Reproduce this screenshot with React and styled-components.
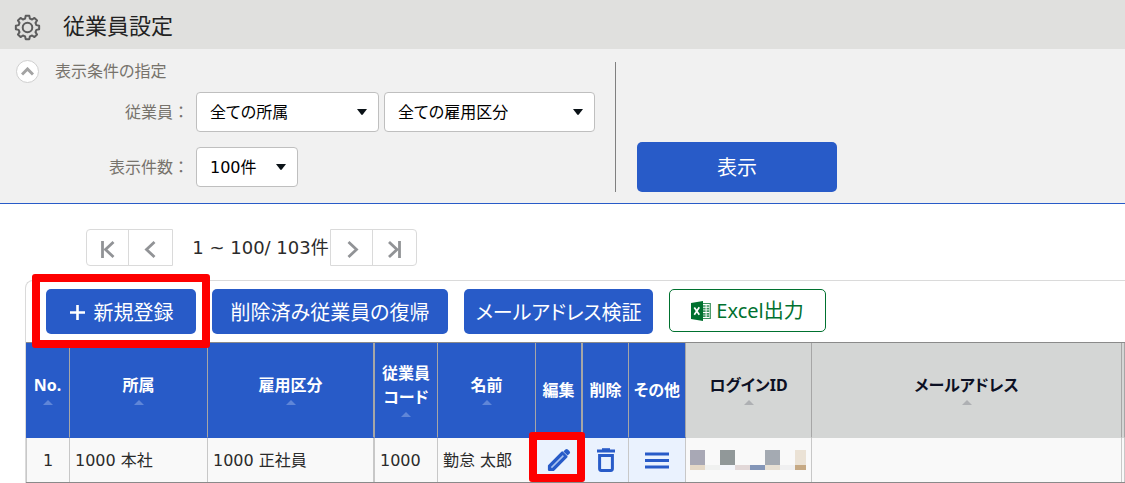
import React from "react";
import styled, { createGlobalStyle } from "styled-components";

const BLUE = "#285bc8";
const UI_FONT = '"DejaVu Sans", "Noto Sans CJK JP", sans-serif';
const HUMANIST_FONT = '"Noto Sans", "Noto Sans CJK JP", sans-serif';

const GlobalStyle = createGlobalStyle`
  * { box-sizing: border-box; }
  body {
    margin: 0;
    background: #fff;
    color: #2b2b2b;
    font-family: ${UI_FONT};
    font-size: 16px;
    line-height: 24px;
    font-feature-settings: "palt";
    overflow-x: hidden;
  }
  button, select { font: inherit; font-feature-settings: inherit; }
`;

const TitleBar = styled.header`
  display: flex;
  align-items: center;
  gap: 22px;
  height: 49px;
  padding: 5px 14px 0;
  background: #e0e0de;
`;

const Title = styled.h1`
  margin: 0;
  font-size: 22px;
  line-height: 32px;
  font-weight: 400;
  color: #222;
`;

const Filters = styled.section`
  display: flex;
  padding: 10px 16px 11px;
  background: #f1f1f1;
  border-bottom: 1px solid ${BLUE};
`;

const Conditions = styled.div`
  flex: 0 0 599px;
`;

const ConditionsHead = styled.div`
  display: flex;
  align-items: center;
  gap: 16px;
  height: 25px;
  color: #77736c;
`;

const Collapse = styled.button`
  display: grid;
  place-items: center;
  width: 23px;
  height: 23px;
  padding: 0;
  border: 1px solid #cfcfcf;
  border-radius: 50%;
  background: #fff;
`;

const FieldRow = styled.div`
  display: flex;
  align-items: center;
  gap: 5px;
  margin-top: ${(p) => p.$gap}px;
`;

const FieldLabel = styled.label`
  width: 175px;
  padding: 2px 2px 0 0;
  text-align: right;
  color: #77736c;
  font-feature-settings: normal;
`;

const SelectBox = styled.span`
  position: relative;
  display: block;
  width: ${(p) => p.$width}px;
  height: 40px;

  svg {
    position: absolute;
    right: 11px;
    top: 17px;
    pointer-events: none;
  }
`;

const Select = styled.select`
  appearance: none;
  width: 100%;
  height: 100%;
  padding: 2px 12px 0 13px;
  border: 1px solid #bfbfbf;
  border-radius: 4px;
  background: #fff;
  color: #000;
`;

const SubmitArea = styled.div`
  display: flex;
  align-items: flex-end;
  margin-top: 3px;
  padding-left: 21px;
  height: 130px;
  border-left: 1px solid #808080;
`;

const Button = styled.button`
  display: flex;
  align-items: center;
  justify-content: center;
  gap: 8px;
  width: ${(p) => p.$width}px;
  height: ${(p) => p.$height || 45}px;
  padding: 2px 0 0;
  border: 0;
  border-radius: 5px;
  background: ${BLUE};
  color: #fff;
  font-size: 20px;
  white-space: nowrap;
`;

const ExcelButton = styled(Button)`
  gap: 5px;
  padding: 1px 0 0;
  border: 1px solid #00712f;
  background: #fff;
  color: #00712f;
  font-family: ${HUMANIST_FONT};
`;

const Pager = styled.nav`
  display: flex;
  align-items: center;
  margin: 25px 0 14px 86px;
  height: 37px;
`;

const PagerGroup = styled.div`
  display: flex;
  height: 37px;
  border: 1px solid #dadada;
  border-radius: ${(p) => (p.$end ? "0 4px 4px 0" : "4px 0 0 4px")};
`;

const PagerButton = styled.button`
  display: grid;
  place-items: center;
  width: ${(p) => (p.$wide ? 44 : 41)}px;
  padding: 3px 0 0;
  border: 0;
  background: none;

  & + & { border-left: 1px solid #dadada; }
`;

const PagerText = styled.span`
  width: 157px;
  text-align: center;
  padding-left: 18px;
  font-size: 18px;
  white-space: nowrap;
`;

const ListPanel = styled.section`
  margin-left: 25px;
  border: 1px solid #dadada;
  border-width: 1px 0 0 1px;
  border-radius: 8px 0 0 0;
`;

const Actions = styled.div`
  display: flex;
  align-items: flex-start;
  gap: 16px;
  padding: 8px 20px;
`;

const Highlighted = styled.div`
  position: relative;

  &::after {
    content: "";
    position: absolute;
    inset: ${(p) => p.$inset};
    border: 8px solid #fe0000;
    border-radius: 3px;
    pointer-events: none;
    z-index: 1;
  }
`;

const Table = styled.table`
  width: 100%;
  table-layout: fixed;
  border-collapse: separate;
  border-spacing: 0;
  border-top: 1px solid #8a8a8a;
  border-bottom: 1px solid #8a8a8a;
`;

const HeadCell = styled.th`
  height: 95px;
  padding: 1px 0 1px;
  border-right: ${(p) => p.$line || 1}px solid #a6a6a6;
  border-bottom: 1px solid ${(p) => (p.$plain ? "#d4d6d5" : BLUE)};
  background: ${(p) => (p.$plain ? "#d4d6d5" : BLUE)};
  color: ${(p) => (p.$plain ? "#0c1024" : "#fff")};
  font-family: ${HUMANIST_FONT};
  font-weight: 700;
  white-space: nowrap;

  svg {
    display: block;
    margin: 3px auto 2px;
  }
`;

const Cell = styled.td`
  height: 44px;
  padding: ${(p) => (p.$center || p.$flush ? 0 : 2)}px ${(p) => (p.$center ? 0 : p.$flush ? 4 : 5)}px 0;
  border-right: ${(p) => p.$line || 1}px solid #c8c8c8;
  background: ${(p) => (p.$action ? "#eaf2fe" : "#f9f9f9")};
  text-align: ${(p) => (p.$center ? "center" : "left")};
  white-space: nowrap;

  &:first-child {
    padding-top: 2px;
    border-left: 1px solid #c8c8c8;
  }
`;

const IconButton = styled.button`
  display: grid;
  place-items: center;
  width: 100%;
  height: 44px;
  padding: 0;
  border: 0;
  background: none;
`;

const Masked = styled.svg`
  display: block;
`;

function GearIcon() {
  const points = [];
  for (let i = 0; i < 8; i++) {
    [[-15, 9.2], [-9, 11.8], [9, 11.8], [15, 9.2]].forEach(([a, r]) => {
      const t = ((i * 45 + a) * Math.PI) / 180;
      points.push(`${(13.5 + r * Math.sin(t)).toFixed(2)},${(13.5 - r * Math.cos(t)).toFixed(2)}`);
    });
  }
  return (
    <svg width="27" height="27" viewBox="0 0 27 27" fill="none" stroke="#5c5c5c" strokeWidth="2" strokeLinejoin="round" aria-hidden="true">
      <polygon points={points.join(" ")} />
      <circle cx="13.5" cy="13.5" r="4.8" />
    </svg>
  );
}

const Chevron = ({ d, bar }) => (
  <svg width="20" height="20" viewBox="0 0 20 20" fill="none" stroke="#919396" strokeWidth="2.8" aria-hidden="true">
    <path d={d} />
    {bar && <path d={bar} />}
  </svg>
);

const SortMark = ({ plain }) => (
  <svg width="10" height="5" viewBox="0 0 10 5" fill={plain ? "#aeb0b3" : "#5f86d8"} aria-hidden="true">
    <path d="M0 5 L5 0 L10 5Z" />
  </svg>
);

function Dropdown({ id, width, children, label }) {
  return (
    <SelectBox $width={width}>
      <Select id={id} aria-label={label}>
        <option>{children}</option>
      </Select>
      <svg width="11" height="6" viewBox="0 0 11 6" fill="#0b1217" aria-hidden="true">
        <path d="M0 0H10L5.8 5.5Q5 6.4 4.2 5.5Z" />
      </svg>
    </SelectBox>
  );
}

function PencilIcon() {
  return (
    <svg width="26" height="26" viewBox="0 0 26 26" aria-hidden="true">
      <path d="M3.2 22.8V18.8L16.3 5.7L20.3 9.7L7.2 22.8Z" fill={BLUE} stroke={BLUE} strokeWidth="2.6" strokeLinejoin="round" />
      <path d="M5.4 20.6 L17.4 8.6" stroke="#a9c1f0" strokeWidth="1.5" />
      <path d="M16.4 3.5L22.5 9.6" stroke="#eaf2fe" strokeWidth="1" />
      <path d="M17.4 4.5L19.4 2.5Q20.6 1.4 21.9 2.5L23.6 4.2Q24.6 5.4 23.6 6.6L21.6 8.6Z" fill={BLUE} />
    </svg>
  );
}

const TrashIcon = () => (
  <svg width="18" height="24" viewBox="0 0 18 24" fill="none" stroke={BLUE} aria-hidden="true">
    <path d="M0 3H18" strokeWidth="3" />
    <path d="M5 1.2H13" strokeWidth="2" />
    <path d="M2.6 7.4H15.4V20.8Q15.4 22.4 13.8 22.4H4.2Q2.6 22.4 2.6 20.8Z" strokeWidth="3" />
  </svg>
);

const MenuIcon = () => (
  <svg width="24" height="18" viewBox="0 0 24 18" stroke={BLUE} strokeWidth="3" aria-hidden="true">
    <path d="M0 3H24M0 9.5H24M0 16H24" />
  </svg>
);

const ExcelIcon = () => (
  <svg width="20" height="20" viewBox="0 0 20 20" aria-hidden="true">
    <path d="M11 2.5H19.3V17.5H11" fill="#fff" stroke="#3d9460" strokeWidth="1.2" />
    <path d="M12 5H14.6M12 7.6H14.6M12 10.2H14.6M12 12.8H14.6M12 15.2H14.6M15.6 5H18.2M15.6 7.6H18.2M15.6 10.2H18.2M15.6 12.8H18.2M15.6 15.2H18.2" stroke="#3d9460" strokeWidth="1.7" />
    <path d="M0 2L12 0V20L0 18Z" fill="#00712f" />
    <path d="M3.3 6.4L8.3 13.8M8.3 6.2L3.3 13.8" stroke="#fff" strokeWidth="1.7" />
  </svg>
);

const MASK = [
  [0, 0, 15, 15, "#a8a8b5"], [30, 0, 15, 15, "#919899"], [75, 0, 15, 15, "#a4aab2"], [105, 0, 11, 15, "#ebe2d5"],
  [0, 15, 15, 5, "#e4d8c7"], [15, 15, 15, 5, "#f0f1f0"], [30, 15, 15, 5, "#f4f6fb"], [45, 15, 15, 5, "#e2d8d8"],
  [60, 15, 15, 5, "#8496b8"], [75, 15, 15, 5, "#e7e0d4"], [90, 15, 15, 5, "#f0f0f1"], [105, 15, 11, 5, "#c6a984"],
];

const COLUMNS = [
  { text: "No.", width: 44, sort: true },
  { text: "所属", width: 138, sort: true },
  { text: "雇用区分", width: 167, line: 2, sort: true },
  { text: <>従業員<br />コード</>, width: 63, sort: true },
  { text: "名前", width: 98, sort: true },
  { text: "編集", width: 47, line: 2 },
  { text: "削除", width: 46 },
  { text: "その他", width: 57 },
  { text: "ログインID", width: 126, plain: true, sort: true },
  { text: "メールアドレス", plain: true, sort: true },
  { text: "", width: 3, plain: true },
];

export default function App() {
  return (
    <>
      <GlobalStyle />
      <TitleBar>
        <GearIcon />
        <Title>従業員設定</Title>
      </TitleBar>

      <Filters>
        <Conditions>
          <ConditionsHead>
            <Collapse aria-label="折りたたむ">
              <svg width="13" height="9" viewBox="0 0 13 9" fill="none" stroke="#a3a3a3" strokeWidth="3" aria-hidden="true">
                <path d="M1 7.5L6.5 2L12 7.5" />
              </svg>
            </Collapse>
            <span>表示条件の指定</span>
          </ConditionsHead>
          <FieldRow $gap={8}>
            <FieldLabel htmlFor="dept">従業員：</FieldLabel>
            <Dropdown id="dept" width={183}>全ての所属</Dropdown>
            <Dropdown id="type" width={211} label="雇用区分">全ての雇用区分</Dropdown>
          </FieldRow>
          <FieldRow $gap={15}>
            <FieldLabel htmlFor="count">表示件数：</FieldLabel>
            <Dropdown id="count" width={102}>100件</Dropdown>
          </FieldRow>
        </Conditions>
        <SubmitArea>
          <Button $width={200} $height={50}>表示</Button>
        </SubmitArea>
      </Filters>

      <Pager>
        <PagerGroup>
          <PagerButton aria-label="最初"><Chevron d="M15.5 3L7.5 10.5L15.5 18" bar="M4.5 2V19" /></PagerButton>
          <PagerButton $wide aria-label="前へ"><Chevron d="M13.5 3L5.5 10.5L13.5 18" /></PagerButton>
        </PagerGroup>
        <PagerText>1 ~ 100/ 103件</PagerText>
        <PagerGroup $end>
          <PagerButton aria-label="次へ"><Chevron d="M6.5 3L14.5 10.5L6.5 18" /></PagerButton>
          <PagerButton $wide aria-label="最後"><Chevron d="M4 3L12 10.5L4 18" bar="M14.5 2V19" /></PagerButton>
        </PagerGroup>
      </Pager>

      <ListPanel>
        <Actions>
          <Highlighted $inset="-15px -14px -14px">
            <Button $width={150}>
              <svg width="17" height="17" viewBox="0 0 17 17" stroke="#fff" strokeWidth="2.6" aria-hidden="true">
                <path d="M8.5 1V16M1 8.5H16" />
              </svg>
              新規登録
            </Button>
          </Highlighted>
          <Button $width={236}>削除済み従業員の復帰</Button>
          <Button $width={189}>メールアドレス検証</Button>
          <ExcelButton $width={157} $height={43}><ExcelIcon />Excel出力</ExcelButton>
        </Actions>

        <Table>
          <colgroup>
            {COLUMNS.map((c, i) => <col key={i} width={c.width} />)}
          </colgroup>
          <thead>
            <tr>
              {COLUMNS.map((c, i) => (
                <HeadCell key={i} $line={c.line} $plain={c.plain}>
                  {c.text}
                  {c.sort && <SortMark plain={c.plain} />}
                </HeadCell>
              ))}
            </tr>
          </thead>
          <tbody>
            <tr>
              <Cell $center>1</Cell>
              <Cell>1000 本社</Cell>
              <Cell $line={2}>1000 正社員</Cell>
              <Cell>1000</Cell>
              <Cell>勤怠 太郎</Cell>
              <Cell $center $action $line={2}>
                <Highlighted $inset="-6px -4px 0 -7px">
                  <IconButton aria-label="編集"><PencilIcon /></IconButton>
                </Highlighted>
              </Cell>
              <Cell $center $action><IconButton aria-label="削除"><TrashIcon /></IconButton></Cell>
              <Cell $center $action><IconButton aria-label="その他"><MenuIcon /></IconButton></Cell>
              <Cell $flush>
                <Masked width="116" height="20" viewBox="0 0 116 20" shapeRendering="crispEdges" aria-hidden="true">
                  {MASK.map(([x, y, w, h, fill]) => <rect key={`${x}-${y}`} x={x} y={y} width={w} height={h} fill={fill} />)}
                </Masked>
              </Cell>
              <Cell />
              <Cell />
            </tr>
          </tbody>
        </Table>
      </ListPanel>
    </>
  );
}
